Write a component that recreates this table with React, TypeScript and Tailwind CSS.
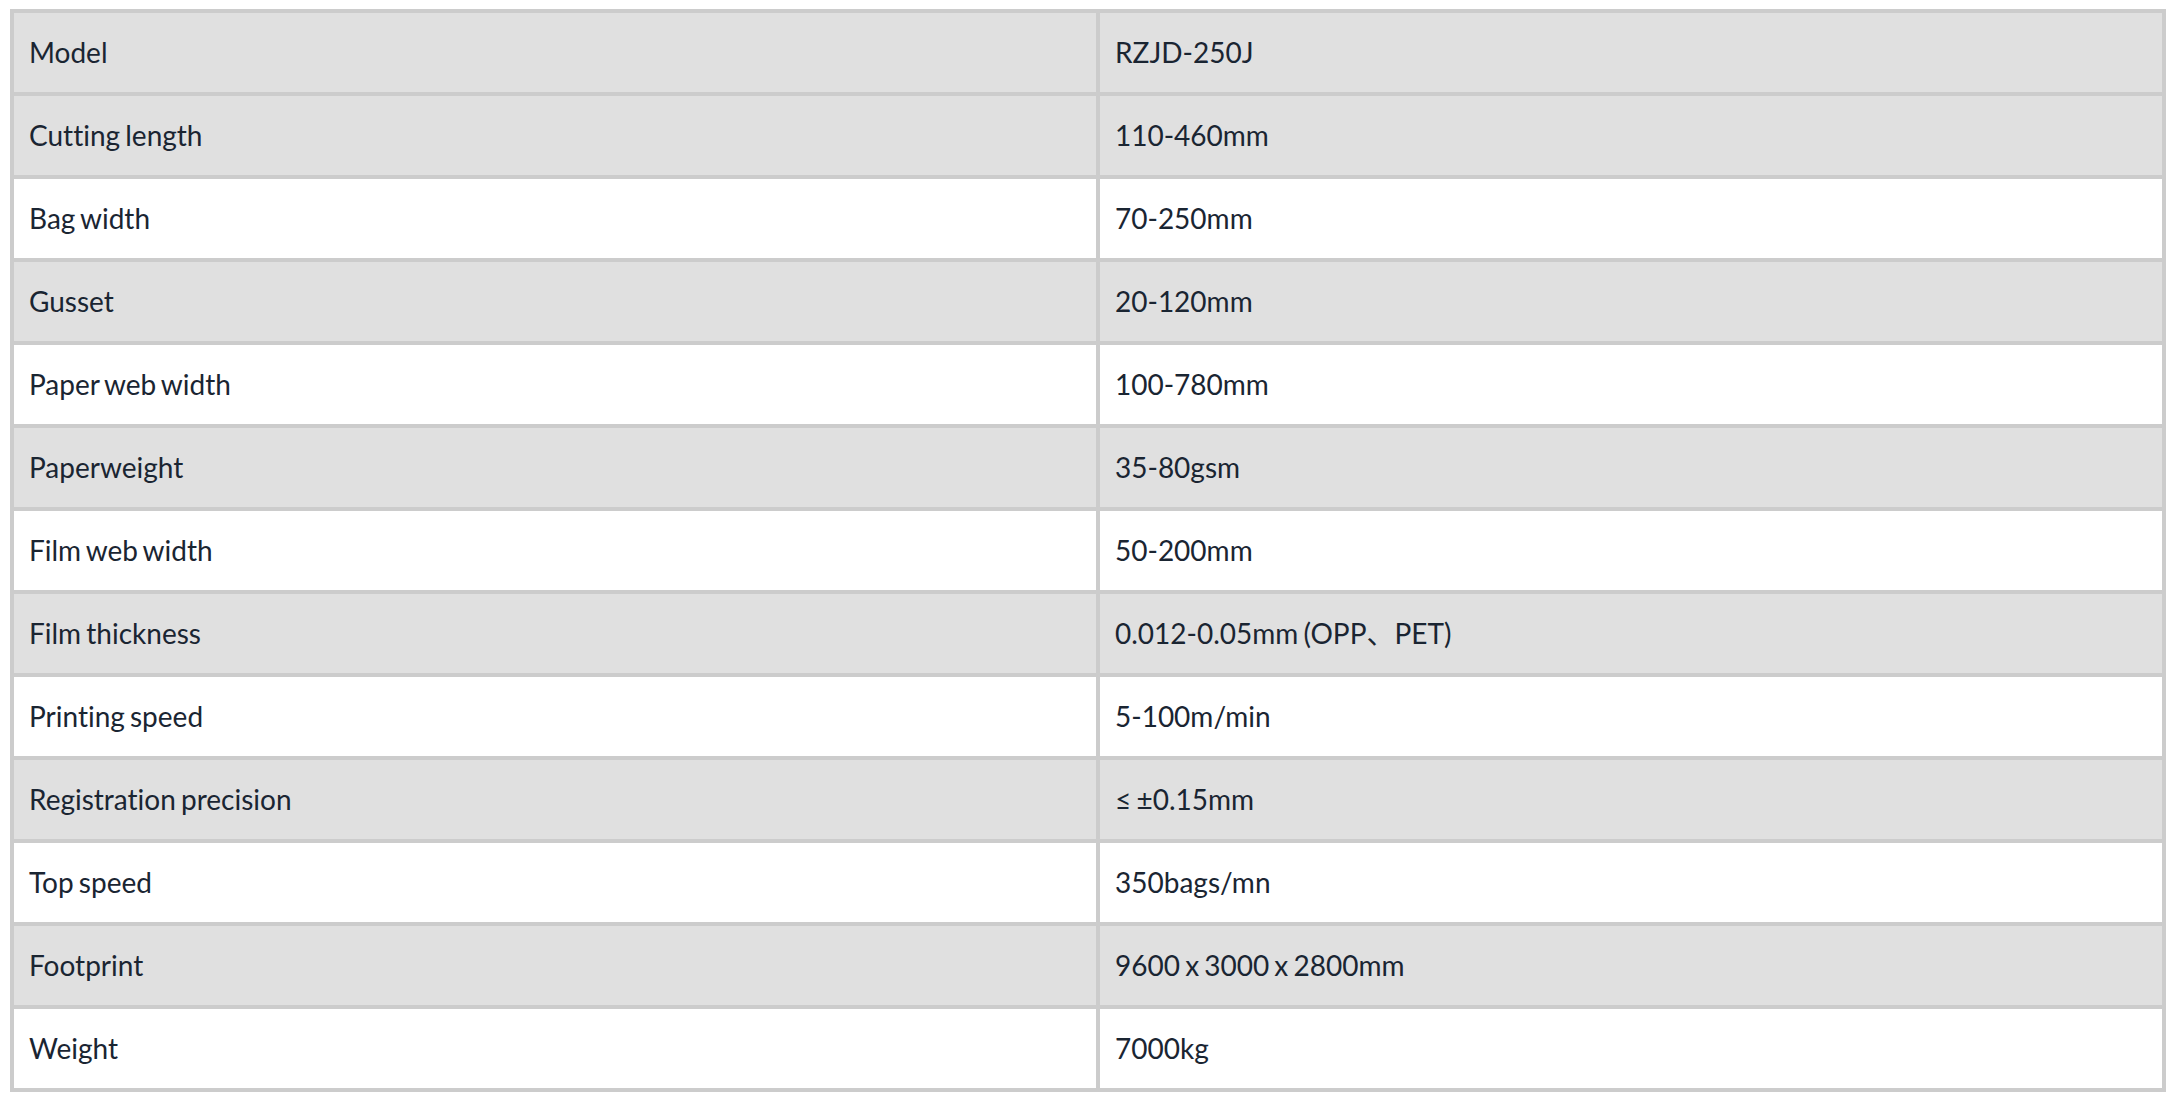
import React from "react";

const rows: [string, string][] = [
  ["Model", "RZJD-250J"],
  ["Cutting length", "110-460mm"],
  ["Bag width", "70-250mm"],
  ["Gusset", "20-120mm"],
  ["Paper web width", "100-780mm"],
  ["Paperweight", "35-80gsm"],
  ["Film web width", "50-200mm"],
  ["Film thickness", "0.012-0.05mm (OPP、PET)"],
  ["Printing speed", "5-100m/min"],
  ["Registration precision", "≤ ±0.15mm"],
  ["Top speed", "350bags/mn"],
  ["Footprint", "9600 x 3000 x 2800mm"],
  ["Weight", "7000kg"],
];

export default function App() {
  return (
    <div className="w-[2174px] h-[1104px] bg-white pt-[9px] pl-[10px]">
      <div
        className="grid grid-cols-[1082px_1062px] gap-[4px] p-[4px] bg-[#cccccc] w-[2156px] text-[28px] text-[#1a2532] [font-variant-ligatures:none] [word-spacing:-2px]"
        style={{ fontFamily: "Lato, 'Noto Sans CJK SC', sans-serif" }}
      >
        {rows.map(([k, v], i) => {
          const gray = i === 0 || i % 2 === 1;
          const bg = gray ? "bg-[#e0e0e0]" : "bg-white";
          return (
            <React.Fragment key={k}>
              <div className={`${bg} h-[79px] flex items-center pl-[15px] pb-[2px]`}>{k}</div>
              <div className={`${bg} h-[79px] flex items-center pl-[15px] pb-[2px]`}>{v}</div>
            </React.Fragment>
          );
        })}
      </div>
    </div>
  );
}
